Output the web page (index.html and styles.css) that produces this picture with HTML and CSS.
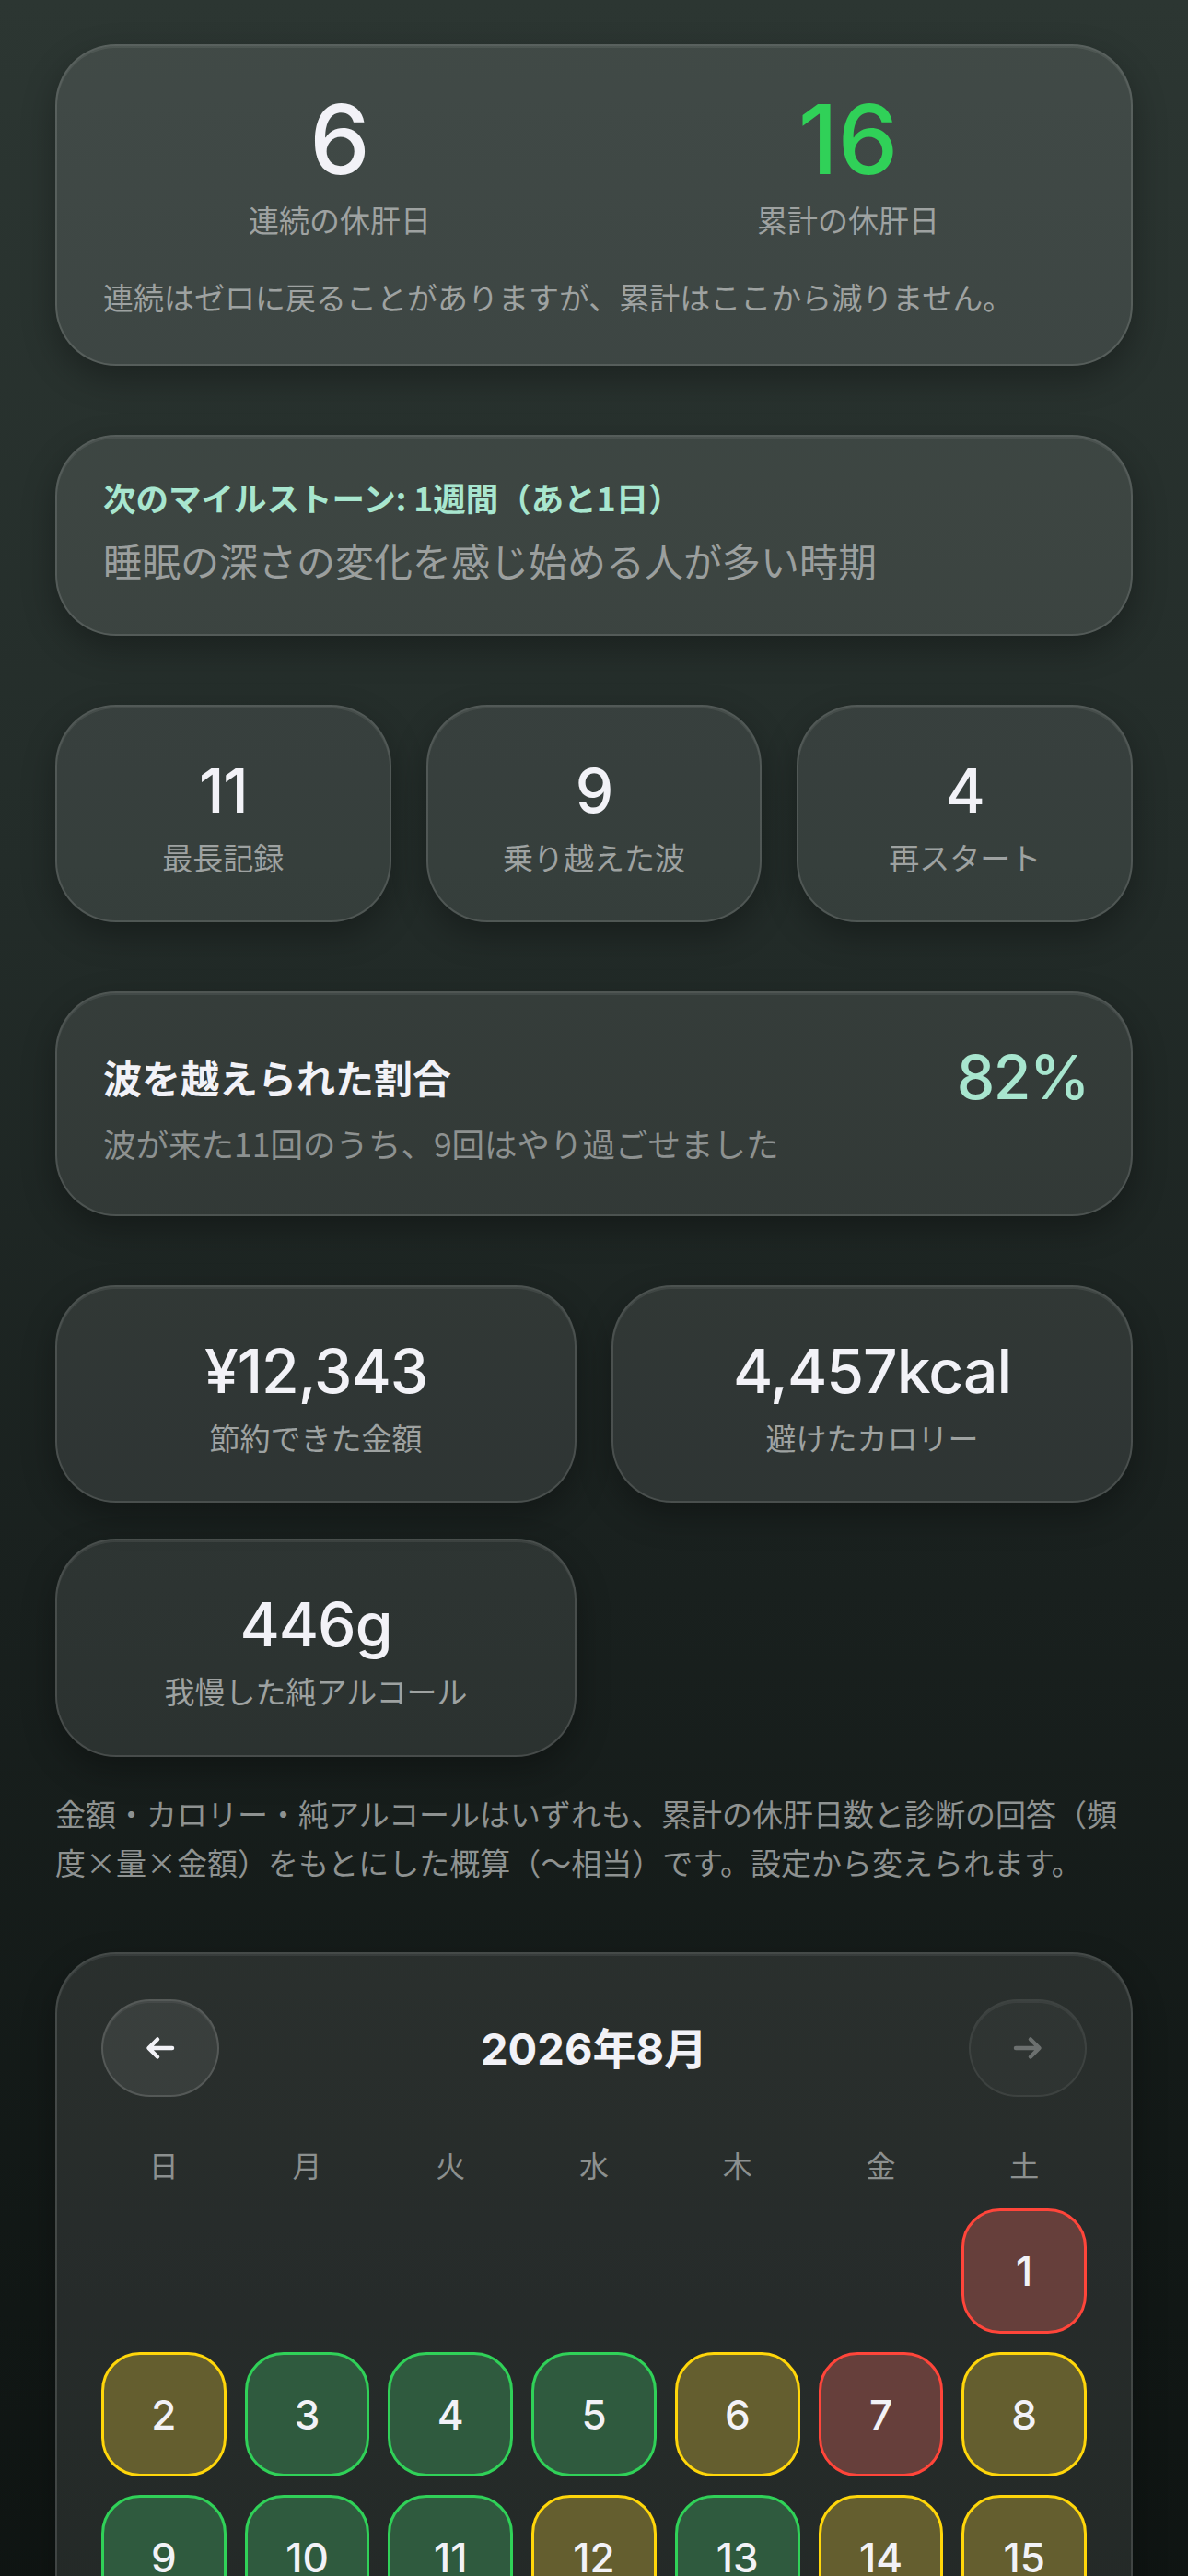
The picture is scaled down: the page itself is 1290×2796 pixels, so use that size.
FILE: index.html
```html
<!doctype html>
<html lang="ja">
<head>
    <meta charset="UTF-8">
    <meta name="viewport" content="width=device-width,initial-scale=1">
    <title>休肝日の記録</title>
    <link rel="stylesheet" href="styles.css">
</head>
<body>
    <main class="screen">
        <section class="card hero">
            <div class="hero-stats">
                <div class="hero-stat">
                    <div class="hero-num">6</div>
                    <div class="stat-label">連続の休肝日</div>
                </div>
                <div class="hero-stat">
                    <div class="hero-num hero-num-green">16</div>
                    <div class="stat-label">累計の休肝日</div>
                </div>
            </div>
            <p class="hero-note">連続はゼロに戻ることがありますが、累計はここから減りません。</p>
        </section>

        <section class="card milestone">
            <div class="milestone-title">次のマイルストーン: 1週間（あと1日）</div>
            <div class="milestone-text">睡眠の深さの変化を感じ始める人が多い時期</div>
        </section>

        <section class="stat-row">
            <div class="card stat-card">
                <div class="stat-num">11</div>
                <div class="stat-label">最長記録</div>
            </div>
            <div class="card stat-card">
                <div class="stat-num">9</div>
                <div class="stat-label">乗り越えた波</div>
            </div>
            <div class="card stat-card">
                <div class="stat-num">4</div>
                <div class="stat-label">再スタート</div>
            </div>
        </section>

        <section class="card wave">
            <div class="wave-head">
                <div class="wave-title">波を越えられた割合</div>
                <div class="wave-pct">82%</div>
            </div>
            <div class="wave-sub">波が来た11回のうち、9回はやり過ごせました</div>
        </section>

        <section class="saving-grid">
            <div class="card stat-card">
                <div class="stat-num">¥12,343</div>
                <div class="stat-label">節約できた金額</div>
            </div>
            <div class="card stat-card">
                <div class="stat-num">4,457kcal</div>
                <div class="stat-label">避けたカロリー</div>
            </div>
            <div class="card stat-card">
                <div class="stat-num">446g</div>
                <div class="stat-label">我慢した純アルコール</div>
            </div>
        </section>

        <p class="estimate-note">金額・カロリー・純アルコールはいずれも、累計の休肝日数と診断の回答（頻度×量×金額）をもとにした概算（〜相当）です。設定から変えられます。</p>

        <section class="card calendar">
            <div class="cal-head">
                <button class="cal-nav" type="button" aria-label="前の月">
                    <svg width="32" height="26" viewBox="0 0 32 26"><path d="M29 13H4M13 3.5L3.5 13l9.5 9.5"/></svg>
                </button>
                <div class="cal-title">2026年8月</div>
                <button class="cal-nav cal-nav-off" type="button" aria-label="次の月">
                    <svg width="32" height="26" viewBox="0 0 32 26"><path d="M3 13h25M19 3.5l9.5 9.5-9.5 9.5"/></svg>
                </button>
            </div>
            <div class="cal-week">
                <span>日</span><span>月</span><span>火</span><span>水</span><span>木</span><span>金</span><span>土</span>
            </div>
            <div class="cal-grid">
                <span></span><span></span><span></span><span></span><span></span><span></span>
                <span class="day day-red">1</span>
                <span class="day day-yellow">2</span>
                <span class="day day-green">3</span>
                <span class="day day-green">4</span>
                <span class="day day-green">5</span>
                <span class="day day-yellow">6</span>
                <span class="day day-red">7</span>
                <span class="day day-yellow">8</span>
                <span class="day day-green">9</span>
                <span class="day day-green">10</span>
                <span class="day day-green">11</span>
                <span class="day day-yellow">12</span>
                <span class="day day-green">13</span>
                <span class="day day-yellow">14</span>
                <span class="day day-yellow">15</span>
                <span class="day day-green">16</span>
                <span class="day day-green">17</span>
                <span class="day day-green">18</span>
                <span class="day day-green">19</span>
                <span class="day day-green">20</span>
                <span class="day day-green">21</span>
                <span class="day">22</span>
            </div>
        </section>
    </main>
</body>
</html>
```

FILE: styles.css
```css
body {
    margin: 0;
    min-height: 100vh;
    background: linear-gradient(180deg, #2c3632 0%, #232c29 30%, #19201e 55%, #111715 80%, #0d1210 100%);
    color: #f2f2f7;
    font-family: "Noto Sans CJK JP", sans-serif;
}

.screen {
    display: flex;
    flex-direction: column;
    padding: 48px 60px 80px;
}

.screen > * + * {
    margin-top: 75px;
}

.card {
    background: rgba(255, 255, 255, 0.09);
    border: 2px solid rgba(255, 255, 255, 0.13);
    border-radius: 66px;
    box-shadow: inset 0 2px 0 rgba(255, 255, 255, 0.07), 0 14px 36px rgba(0, 0, 0, 0.3);
}

/* hero */

.hero {
    padding: 49px 50px 51px;
    background: rgba(255, 255, 255, 0.1);
}

.hero-stats {
    display: grid;
    grid-template-columns: 1fr 1fr;
    gap: 38px;
    text-align: center;
}

.hero-num {
    font-family: Inter, sans-serif;
    font-weight: 500;
    font-size: 104px;
    line-height: 1;
}

.hero-num-green {
    color: #30d158;
}

.hero .stat-label {
    margin-top: 14px;
}

.stat-label {
    font-size: 33px;
    line-height: 1.3;
    color: #9ea2a1;
}

.hero-note {
    margin: 41px 0 0;
    font-size: 33px;
    line-height: 1.3;
    color: #9ea2a1;
}

/* milestone */

.milestone {
    padding: 43px 50px 52px;
    background: rgba(255, 255, 255, 0.1);
}

.milestone-title {
    font-size: 35.5px;
    line-height: 1.3;
    font-weight: 700;
    color: #a8e6cf;
}

.milestone-text {
    margin-top: 18px;
    font-size: 42px;
    line-height: 1.3;
    color: #9b9f9e;
}

/* stat cards */

.stat-row {
    display: grid;
    grid-template-columns: repeat(3, 1fr);
    gap: 38px;
}

.stat-card {
    padding: 58px 20px 48px;
    text-align: center;
}

.stat-num {
    font-family: Inter, sans-serif;
    font-weight: 500;
    font-size: 66px;
    line-height: 1;
    letter-spacing: -1px;
}

.stat-card .stat-label {
    margin-top: 18px;
}

/* wave */

.wave {
    padding: 58px 46px 53px 50px;
}

.wave-head {
    display: flex;
    align-items: center;
    justify-content: space-between;
}

.wave-title {
    font-size: 42px;
    line-height: 1.3;
    font-weight: 700;
}

.wave-pct {
    font-family: Inter, sans-serif;
    font-weight: 500;
    font-size: 66px;
    line-height: 1;
    letter-spacing: -1.5px;
    color: #a8e6cf;
}

.wave-sub {
    margin-top: 16px;
    font-size: 35.5px;
    line-height: 1.3;
    color: #8d9190;
}

/* savings */

.saving-grid {
    display: grid;
    grid-template-columns: 1fr 1fr;
    gap: 39px 38px;
}

.screen > .estimate-note {
    margin: 35px 0 0;
    font-size: 33px;
    line-height: 53px;
    color: #8e9291;
}

/* calendar */

.screen > .calendar {
    margin-top: 71px;
}

.calendar {
    padding: 49px 48px 48px;
}

.cal-head {
    display: flex;
    align-items: center;
    justify-content: space-between;
}

.cal-nav {
    display: flex;
    align-items: center;
    justify-content: center;
    width: 128px;
    height: 106px;
    padding: 0;
    border: 2px solid rgba(255, 255, 255, 0.14);
    border-radius: 53px;
    background: rgba(255, 255, 255, 0.08);
    box-shadow: inset 0 2px 0 rgba(255, 255, 255, 0.06);
}

.cal-nav path {
    fill: none;
    stroke: #f2f2f7;
    stroke-width: 4.5;
    stroke-linecap: round;
    stroke-linejoin: round;
}

.cal-nav-off {
    background: rgba(255, 255, 255, 0.03);
    border-color: rgba(255, 255, 255, 0.07);
}

.cal-nav-off path {
    stroke: #6c706f;
}

.cal-title {
    font-family: Inter, "Noto Sans CJK JP", sans-serif;
    font-size: 47px;
    font-weight: 700;
    line-height: 1.3;
}

.cal-week {
    display: grid;
    grid-template-columns: repeat(7, 1fr);
    gap: 20px;
    margin-top: 53px;
    text-align: center;
    font-size: 32px;
    line-height: 1.3;
    color: #8c908f;
}

.cal-grid {
    display: grid;
    grid-template-columns: repeat(7, 1fr);
    gap: 20px;
    margin-top: 26px;
}

.day {
    display: flex;
    align-items: center;
    justify-content: center;
    aspect-ratio: 1;
    box-sizing: border-box;
    border: 3px solid transparent;
    border-radius: 42px;
    font-family: Inter, sans-serif;
    font-weight: 500;
    font-size: 44px;
    color: #f2f2f7;
}

.day-green {
    background: #2f5a3e;
    border-color: #30d158;
}

.day-yellow {
    background: #645e2f;
    border-color: #ffd60a;
}

.day-red {
    background: #663f3b;
    border-color: #ff453a;
}
```
